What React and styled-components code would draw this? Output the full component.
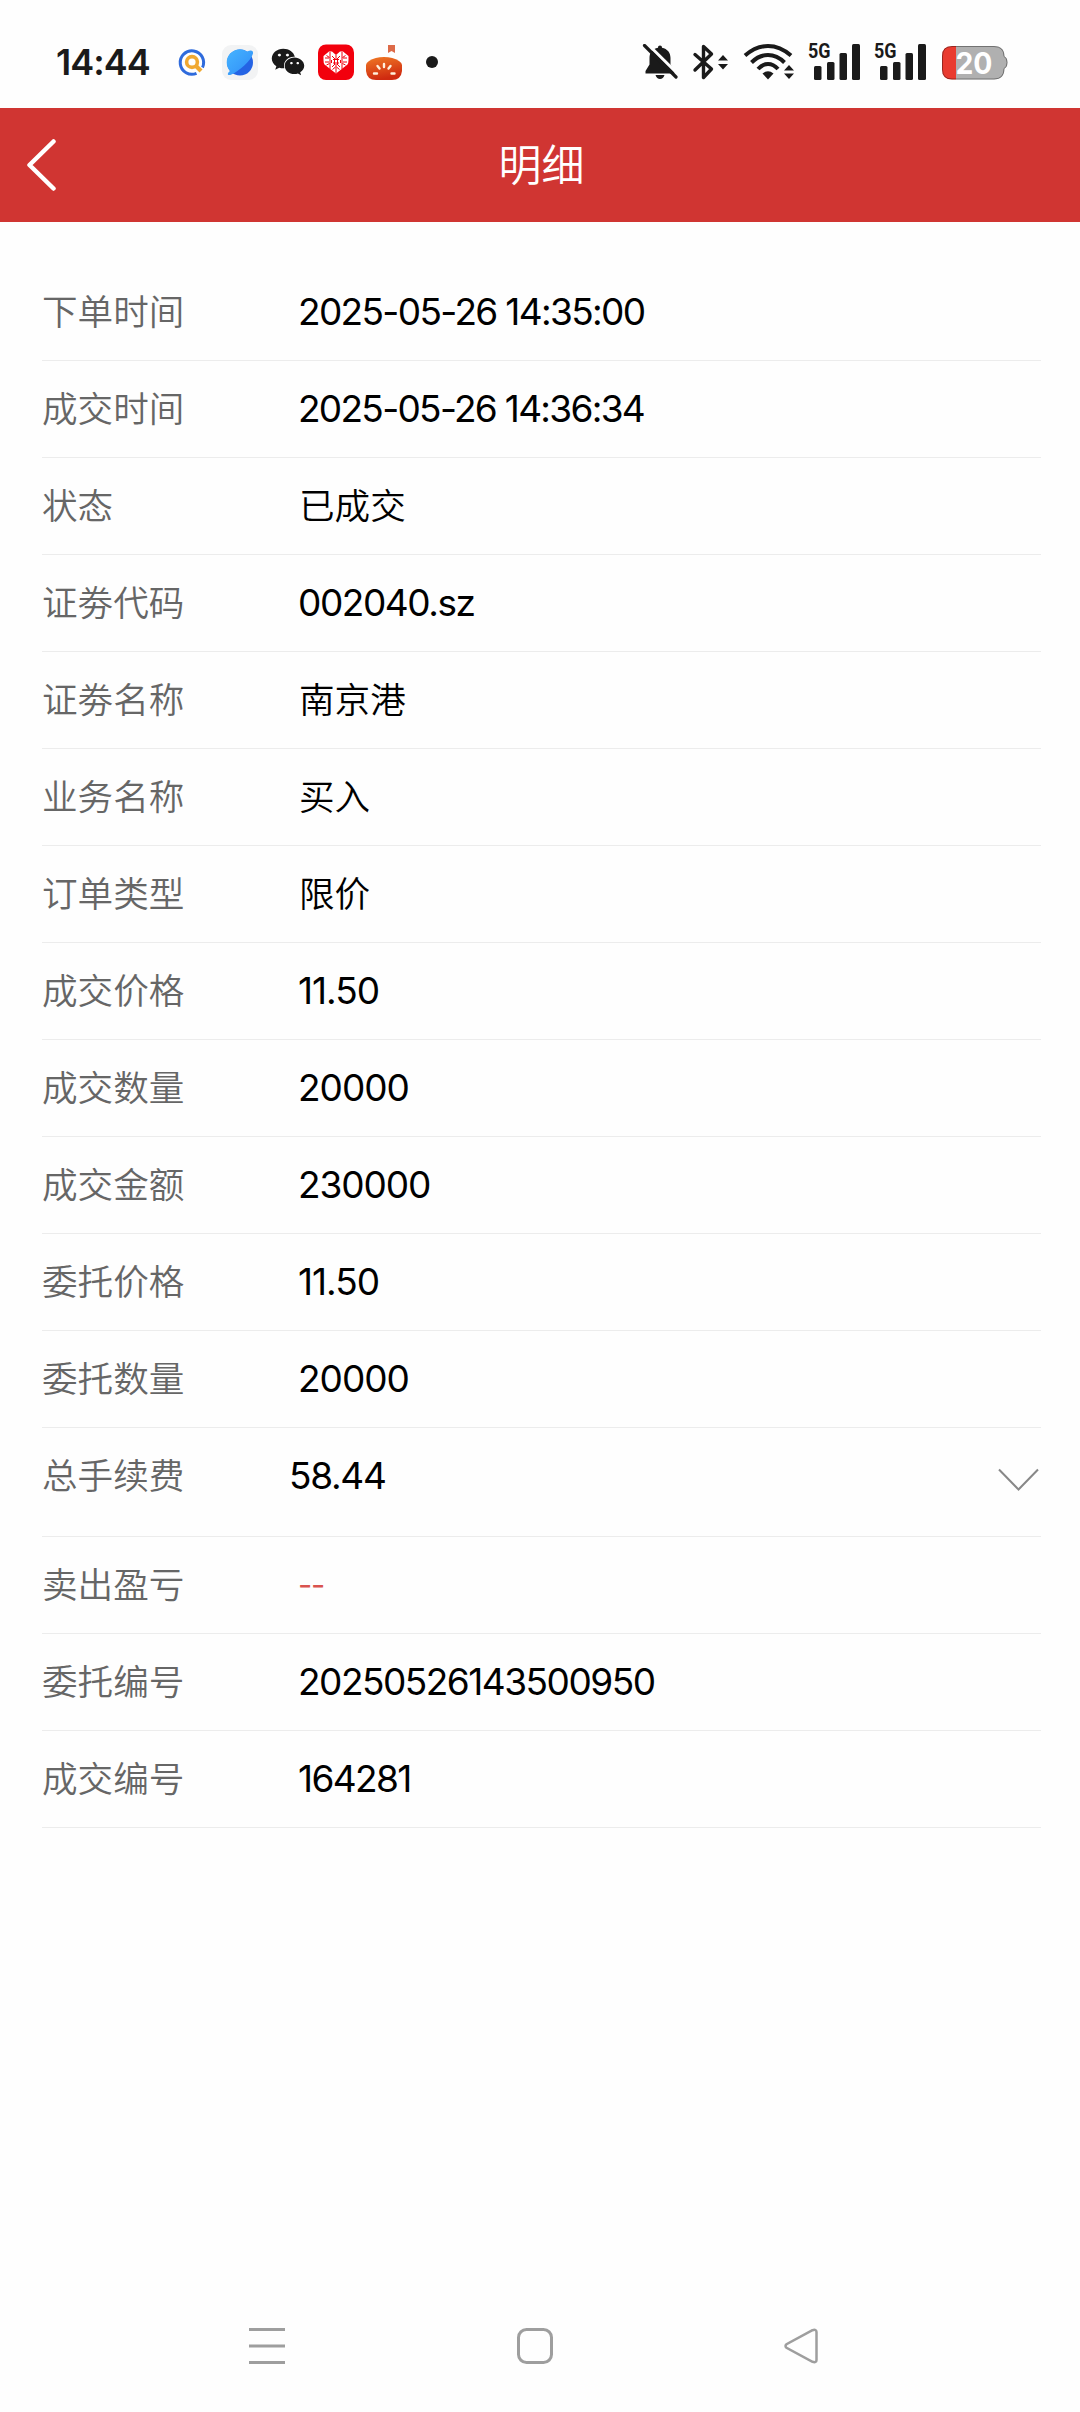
import styled, { createGlobalStyle } from "styled-components";
import { FaWeixin } from "react-icons/fa";

const GlobalStyle = createGlobalStyle`
  * {
    box-sizing: border-box;
  }

  body {
    margin: 0;
    background: #fefefe;
    font-family: Inter, "Noto Sans CJK SC", sans-serif;
  }
`;

const Page = styled.div`
  width: 1080px;
  height: 2412px;
  display: flex;
  flex-direction: column;
  background: #fefefe;
`;

const StatusBar = styled.div`
  height: 108px;
  padding: 44px 72px 0 56px;
  display: flex;
  align-items: flex-start;
  justify-content: space-between;
  color: #1a1a1a;
`;

const StatusGroup = styled.div`
  height: 36px;
  display: flex;
  align-items: center;
  gap: 12px;

  & > svg {
    flex: none;
    display: block;
  }
`;

const Clock = styled.span`
  width: 106px;
  font-size: 36px;
  font-weight: 600;
  line-height: 36px;
  letter-spacing: -1px;
`;

const WeixinBox = styled.span`
  width: 36px;
  height: 36px;
  display: flex;
  align-items: center;
  justify-content: center;
`;

const Header = styled.header`
  height: 114px;
  padding: 0 26px;
  display: grid;
  grid-template-columns: 30px 1fr 30px;
  align-items: center;
  background: #d03532;
`;

const Title = styled.h1`
  margin: 0;
  padding-left: 3px;
  color: #fff;
  font-size: 43px;
  font-weight: 350;
  line-height: 60px;
  text-align: center;
`;

const List = styled.main`
  flex: 1;
  padding: 42px 39px 0 42px;
`;

const Row = styled.div`
  height: ${props => (props.$tall ? 109 : 97)}px;
  display: flex;
  align-items: flex-start;
  border-bottom: 1px solid #ececec;
`;

const Label = styled.span`
  width: ${props => (props.$narrow ? 247 : 256)}px;
  color: #666;
  font-size: 35.6px;
  font-weight: 350;
  line-height: 98px;
`;

const Value = styled.span`
  flex: 1;
  color: ${props => (props.$red ? "#d9534f" : "#000")};
  font-size: ${props => (props.$red ? 31 : 37)}px;
  font-weight: 400;
  line-height: 96px;
  letter-spacing: ${props => props.$spacing || 0}px;
`;

const TextValue = styled(Value)`
  padding-left: 1px;
  font-size: 35.6px;
  font-weight: 350;
  line-height: 98px;
`;

const ArrowBox = styled.span`
  height: 103px;
  display: flex;
  align-items: center;
`;

const NavBar = styled.nav`
  height: 132px;
  padding: 0 260px 0 249px;
  display: flex;
  align-items: center;
  justify-content: space-between;
`;

const rows = [
  { label: "下单时间", value: "2025-05-26 14:35:00", spacing: -1.65 },
  { label: "成交时间", value: "2025-05-26 14:36:34", spacing: -1.7 },
  { label: "状态", value: "已成交", text: true },
  { label: "证劵代码", value: "002040.sz", spacing: -1.45 },
  { label: "证劵名称", value: "南京港", text: true },
  { label: "业务名称", value: "买入", text: true },
  { label: "订单类型", value: "限价", text: true },
  { label: "成交价格", value: "11.50", spacing: -1 },
  { label: "成交数量", value: "20000", spacing: -1 },
  { label: "成交金额", value: "230000", spacing: -1.1 },
  { label: "委托价格", value: "11.50", spacing: -1 },
  { label: "委托数量", value: "20000", spacing: -1 },
  { label: "总手续费", value: "58.44", spacing: -1.3, expandable: true },
  { label: "卖出盈亏", value: "--", spacing: -1.2, red: true },
  { label: "委托编号", value: "20250526143500950", spacing: -1.5 },
  { label: "成交编号", value: "164281", spacing: -1.6 },
];

const SmallText = styled.text`
  font-family: Roboto, sans-serif;
  font-size: 20.5px;
  font-weight: 700;
`;

const BatteryText = styled.text`
  font-family: Inter, sans-serif;
  font-size: 30px;
  font-weight: 700;
`;

function SearchIcon() {
  return (
    <svg width="36" height="36" viewBox="0 0 36 36" fill="none">
      <path d="M22.500 29.300A11.700 11.700 0 1 1 28.500 23.500" stroke="#2f6bdc" strokeWidth="3" />
      <circle cx="18" cy="18" r="5.400" stroke="#f0a830" strokeWidth="3.600" />
      <path d="M22 22l5 5" stroke="#f0a830" strokeWidth="4.200" />
    </svg>
  );
}

function PlanetIcon() {
  return (
    <svg width="36" height="36" viewBox="0 0 36 36">
      <defs>
        <linearGradient id="planet" x1="0" y1="0" x2="1" y2="1">
          <stop offset="0" stopColor="#46b4ff" />
          <stop offset="1" stopColor="#2f8df8" />
        </linearGradient>
      </defs>
      <rect y="1" width="36" height="35" rx="9" fill="#f2f3f4" />
      <circle cx="18" cy="18.500" r="13" fill="#2463e4" />
      <path d="M8 27A13 13 0 0 1 25 7.600C29 5.600 31.500 6.500 31 9.500C29 17 17 27 9.500 30.500C5.500 32 4.500 30 8 27Z" fill="url(#planet)" />
    </svg>
  );
}

function HeartIcon() {
  return (
    <svg width="36" height="36" viewBox="0 0 36 36">
      <rect y="0.500" width="36" height="35.500" rx="8" fill="#f2000d" />
      <path d="M18 29.500L6.500 20.500Q5.500 19 5.500 16V12L11 7.500H14L18 11L22 7.500H25L30.500 12V16Q30.500 19 29.500 20.500Z" fill="#fff" />
      <g stroke="#f2000d" strokeWidth="1" fill="none">
        <path d="M12 8v17M24 8v17M18 11v4M18 20v9M7 14h4M7 18h4M25 14h4M25 18h4M14 12l3 3M22 12l-3 3M14 23l3-3M22 23l-3-3M8.500 11.500l3 2M27.500 11.500l-3 2M8.500 21l3-1.500M27.500 21l-3-1.500" />
        <path d="M15 15.500h6M15 19h6M16.500 14v6.500M19.500 14v6.500" />
        <path d="M13.500 16v3M22.500 16v3M14.500 25.500l3-2.500M21.500 25.500l-3-2.500" />
      </g>
    </svg>
  );
}

function TomatoIcon() {
  return (
    <svg width="36" height="36" viewBox="0 0 36 36">
      <defs>
        <linearGradient id="tomato" x1="0" y1="0" x2="0.300" y2="1">
          <stop offset="0" stopColor="#f07a25" />
          <stop offset="1" stopColor="#cf2a10" />
        </linearGradient>
      </defs>
      <path d="M22 1h7v8l-3.500-2-3.500 2z" fill="#dd6a48" />
      <path d="M0 21Q0 19 3 17Q9 13 18 13T33 17Q36 19 36 21V27Q35 36 26 36H10Q1 36 0 27Z" fill="url(#tomato)" />
      <g stroke="#fff0dc" strokeWidth="2.400" strokeLinecap="round">
        <path d="M18 20v3M11.500 22l2 2.500M24.500 22l-2 2.500M8 29.500h3M25.500 29.500h3" />
      </g>
    </svg>
  );
}

function MutedBellIcon() {
  return (
    <svg width="36" height="36" viewBox="0 0 36 36" fill="#1a1a1a">
      <path d="M18 1.500c1.200 0 2 .8 2 2.200 5.500 1.200 8.500 5 8.500 10.300v6.500l4 6.500v2.500H3.500V27l4-6.500V14c0-5.300 3-9.100 8.500-10.300 0-1.400.8-2.200 2-2.200Z" />
      <path d="M13.500 31h9c-.8 2.500-2.400 4-4.500 4s-3.700-1.500-4.500-4Z" />
      <path d="M4.500-1L38 32" stroke="#fefefe" strokeWidth="3" />
      <path d="M2.500 1.500L34 33" stroke="#1a1a1a" strokeWidth="3.200" strokeLinecap="round" />
    </svg>
  );
}

function BluetoothIcon() {
  return (
    <svg width="40" height="36" viewBox="0 0 40 36">
      <path d="M5 10.500L21.500 25 13.500 33.500V2.500L21.500 10 5 26" fill="none" stroke="#1a1a1a" strokeWidth="3.400" strokeLinejoin="round" strokeLinecap="round" />
      <path d="M28 16.500l5-5.500 5 5.500zM28 20l5 5.500 5-5.500z" fill="#1a1a1a" />
    </svg>
  );
}

function WifiIcon() {
  return (
    <svg width="54" height="36" viewBox="0 0 54 36">
      <g fill="none" stroke="#1a1a1a" strokeWidth="4">
        <path d="M3 11.500Q14 2 26 2t23 9.500" />
        <path d="M9.500 18.500Q17 11 26 11t16.500 7.500" />
        <path d="M16 25Q20.500 20 26 20t10 5" />
      </g>
      <path d="M20.500 29.500Q26 25 31.500 29.500L26 35.500z" fill="#1a1a1a" />
      <path d="M41 27l6-7 6 7v2l-6 7-6-7z" fill="#fefefe" />
      <path d="M42 26.500l5-5.500 5 5.500zM42 29.500l5 5.500 5-5.500z" fill="#1a1a1a" />
    </svg>
  );
}

function SignalIcon() {
  return (
    <svg width="54" height="56" viewBox="0 -10 54 56" fill="#1a1a1a">
      <SmallText x="0" y="14" textLength="22.500" lengthAdjust="spacingAndGlyphs">5G</SmallText>
      <rect x="6" y="22" width="7.500" height="14" rx="1.500" />
      <rect x="19" y="18" width="7.500" height="18" rx="1.500" />
      <rect x="31.500" y="9" width="7.500" height="27" rx="1.500" />
      <rect x="44" y="0" width="8" height="36" rx="1.500" />
    </svg>
  );
}

function BatteryIcon() {
  return (
    <svg width="68" height="36" viewBox="0 0 68 36">
      <path d="M16 2H54Q64.500 2 64.500 12.500Q67.500 13.500 67.500 18.500T64.500 24.500Q64.500 35.500 54 35.500H16Z" fill="#b0b0b0" />
      <path d="M16 2H12Q2 2 2 12V25.500Q2 35.500 12 35.500H16Z" fill="#e93b30" />
      <path d="M12 2.500H54Q64 2.500 64 12.500Q67 13.500 67 18.500T64 24.500Q64 35 54 35H12Q2.500 35 2.500 25.500V12Q2.500 2.500 12 2.500Z" fill="none" stroke="#000" strokeOpacity="0.350" />
      <BatteryText x="15.500" y="30" fill="#fff" textLength="37" lengthAdjust="spacingAndGlyphs">20</BatteryText>
    </svg>
  );
}

function App() {
  return (
    <>
      <GlobalStyle />
      <Page>
        <StatusBar>
          <StatusGroup>
            <Clock>14:44</Clock>
            <SearchIcon />
            <PlanetIcon />
            <WeixinBox>
              <FaWeixin size={34} />
            </WeixinBox>
            <HeartIcon />
            <TomatoIcon />
            <svg width="36" height="36" viewBox="0 0 36 36">
              <circle cx="18" cy="18" r="6" fill="#1a1a1a" />
            </svg>
          </StatusGroup>
          <StatusGroup>
            <MutedBellIcon />
            <BluetoothIcon />
            <WifiIcon />
            <SignalIcon />
            <SignalIcon />
            <BatteryIcon />
          </StatusGroup>
        </StatusBar>

        <Header>
          <svg width="30" height="54" viewBox="0 0 30 54">
            <path d="M27.500 3.500L3.500 27l24 23.500" fill="none" stroke="#fff" strokeWidth="4.500" strokeLinecap="round" strokeLinejoin="round" />
          </svg>
          <Title>明细</Title>
        </Header>

        <List>
          {rows.map(row => {
            const Content = row.text ? TextValue : Value;
            return (
              <Row key={row.label} $tall={row.expandable}>
                <Label $narrow={row.expandable}>{row.label}</Label>
                <Content $red={row.red} $spacing={row.spacing}>{row.value}</Content>
                {row.expandable && (
                  <ArrowBox>
                    <svg width="43" height="24" viewBox="0 0 43 24">
                      <path d="M1 1.500L20.500 21.500 40 1.500" fill="none" stroke="#888" strokeWidth="2" />
                    </svg>
                  </ArrowBox>
                )}
              </Row>
            );
          })}
        </List>

        <NavBar>
          <svg width="36" height="36" viewBox="0 0 36 36">
            <path d="M0 1.500h36M0 18h36M0 34.500h36" stroke="#9e9e9e" strokeWidth="3" />
          </svg>
          <svg width="36" height="36" viewBox="0 0 36 36">
            <rect x="1.500" y="1.500" width="33" height="33" rx="8" fill="none" stroke="#9e9e9e" strokeWidth="3" />
          </svg>
          <svg width="36" height="36" viewBox="1 0 36 36">
            <path d="M29.500 2.200L3.500 16.200Q1.500 18 3.500 19.800L29.500 33.800Q33.500 35 33.500 32V4Q33.500 1 29.500 2.200Z" fill="none" stroke="#9e9e9e" strokeWidth="2.500" />
          </svg>
        </NavBar>
      </Page>
    </>
  );
}

export default App;
